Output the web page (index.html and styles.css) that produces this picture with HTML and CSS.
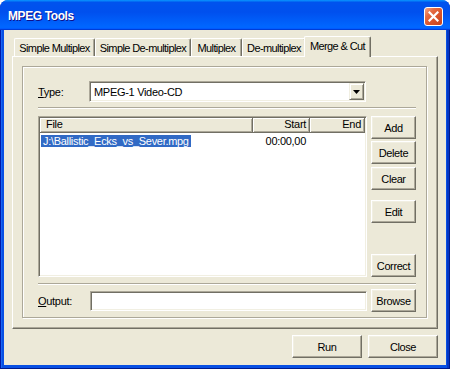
FILE: index.html
```html
<!DOCTYPE html>
<html>
<head>
<meta charset="utf-8">
<title>MPEG Tools</title>
<link rel="stylesheet" href="styles.css">
</head>
<body>
<div class="window">
  <div class="titlebar">
    <span class="title">MPEG Tools</span>
    <span class="close-x">
      <svg width="11" height="11" viewBox="0 0 11 11"><path d="M1.5 1.5 L9.5 9.5 M9.5 1.5 L1.5 9.5" stroke="#fff" stroke-width="2.2" stroke-linecap="square"/></svg>
    </span>
  </div>
  <div class="client">
    <div class="tabs">
      <div class="tab t1">Simple Multiplex</div>
      <div class="tab t2">Simple De-multiplex</div>
      <div class="tab t3">Multiplex</div>
      <div class="tab t4">De-multiplex</div>
      <div class="tab t5 active">Merge &amp; Cut</div>
    </div>
    <div class="panel">
      <div class="group">
        <div class="row type-row">
          <span class="lbl lbl-type"><u>T</u>ype:</span>
          <div class="combo">
            <span class="combo-text">MPEG-1 Video-CD</span>
            <span class="combo-btn"><svg width="7" height="4" viewBox="0 0 7 4"><polygon points="0,0 7,0 3.5,4" fill="#000"/></svg></span>
          </div>
        </div>
        <div class="sep sep1"></div>
        <div class="mid">
          <div class="listview">
            <div class="lv-header">
              <div class="hcell h-file">File</div>
              <div class="hcell h-start">Start</div>
              <div class="hcell h-end">End</div>
            </div>
            <div class="lv-row">
              <div class="cell c-file"><span class="sel">J:\Ballistic_Ecks_vs_Sever.mpg</span></div>
              <div class="cell c-start">00:00,00</div>
              <div class="cell c-end"></div>
            </div>
          </div>
          <div class="side-btns">
            <button class="btn side b-add">Add</button>
            <button class="btn side b-delete">Delete</button>
            <button class="btn side b-clear">Clear</button>
            <button class="btn side b-edit">Edit</button>
            <button class="btn side b-correct">Correct</button>
          </div>
        </div>
        <div class="sep sep2"></div>
        <div class="row out-row">
          <span class="lbl lbl-out"><u>O</u>utput:</span>
          <div class="textbox"></div>
          <button class="btn side b-browse">Browse</button>
        </div>
      </div>
    </div>
    <div class="footer">
      <button class="btn foot">Run</button>
      <button class="btn foot">Close</button>
    </div>
  </div>
</div>
</body>
</html>
```
FILE: styles.css
```css
* { box-sizing: border-box; }
html, body { margin: 0; padding: 0; background: #ffffff; }
body {
  width: 450px; height: 369px; overflow: hidden;
  font-family: "Liberation Sans", Arial, sans-serif;
  font-size: 11px; letter-spacing: -0.3px; color: #000;
}
.window {
  width: 450px; height: 369px;
  display: flex; flex-direction: column;
  border-radius: 8px 8px 0 0; overflow: hidden;
  background: linear-gradient(to right, #0019a8 0, #0019a8 1px, #1a66f2 1px, #1a66f2 2px, #0850e4 2px, #0850e4 447px, #0437c4 447px, #0437c4 449px, #001a8c 449px);
  box-shadow: inset 0 -1px #001a8c;
}
.titlebar {
  height: 30px; flex: none;
  display: flex; align-items: center; justify-content: space-between;
  padding: 2px 7px 0 8px;
  background: linear-gradient(180deg, #0997ff, #0053ee 8%, #0050ee 40%, #06f 88%, #06f 93%, #005bff 95%, #003dd7 96%, #003dd7);
}
.title {
  color: #fff; font-weight: bold; font-size: 12px; letter-spacing: -0.4px;
  text-shadow: 1px 1px #0f1089;
}
.close-x {
  width: 19px; height: 19px; border: 1px solid #fff; border-radius: 3px;
  display: flex; align-items: center; justify-content: center;
  background: linear-gradient(135deg, #f3a789 0%, #e46a42 30%, #d9532a 60%, #c7431d 100%);
}
.client {
  flex: 1; margin: 0 4px 4px;
  background: #ece9d8;
  display: flex; flex-direction: column;
  padding: 6px 8px 7px 8px;
}
.tabs {
  height: 20px; display: flex; align-items: flex-end;
  padding-left: 2px; position: relative; z-index: 2;
}
.tab {
  height: 18px; background: #ece9d8;
  border-top: 1px solid #fff; border-left: 1px solid #fff; border-right: 1px solid #716f64;
  border-radius: 2px 2px 0 0;
  box-shadow: inset -1px 0 #aca899;
  display: flex; align-items: center; justify-content: center;
  padding-top: 1px; white-space: nowrap;
  letter-spacing: -0.6px; overflow: hidden;
}
.t1 { width: 81px; }
.t2 { width: 96px; }
.t3 { width: 51px; }
.t4 { width: 64px; }
.t5 { width: 63px; }
.tab.active {
  height: 21px; margin: 0 -2px -1px; width: 67px;
  padding-top: 0; padding-bottom: 2px;
  position: relative; z-index: 3;
}
.panel {
  height: 273px; flex: none;
  border: 1px solid; border-color: #fff #716f64 #716f64 #fff;
  box-shadow: inset -1px -1px #aca899;
  padding: 9px 10px 10px 9px;
}
.group {
  width: 405px; height: 252px;
  border: 1px solid #aca899;
  box-shadow: inset 1px 1px #fff, 1px 1px 0 #fff;
  padding: 14px 10px 5px 15px;
  display: flex; flex-direction: column;
}
.row { display: flex; align-items: center; }
.type-row { height: 21px; }
.lbl { white-space: nowrap; }
.lbl-type { width: 51px; }
.lbl-out { width: 52px; }
.combo {
  width: 277px; height: 21px; background: #fff;
  border: 1px solid; border-color: #aca899 #fff #fff #aca899;
  box-shadow: inset 1px 1px #716f64, inset -1px -1px #f1efe2;
  padding: 1px; display: flex; align-items: center;
}
.combo-text { flex: 1; padding-left: 3px; }
.combo-btn {
  width: 15px; height: 17px; background: #ece9d8;
  border: 1px solid; border-color: #f1efe2 #716f64 #716f64 #f1efe2;
  box-shadow: inset 1px 1px #fff, inset -1px -1px #aca899;
  display: flex; align-items: center; justify-content: center;
}
.sep {
  width: 378px; height: 2px;
  border-top: 1px solid #aca899; border-bottom: 1px solid #fff;
}
.sep1 { margin-top: 5px; }
.mid { display: flex; gap: 4px; margin-top: 7px; height: 161px; }
.listview {
  width: 329px; height: 161px; background: #fff;
  border: 1px solid; border-color: #aca899 #fff #fff #aca899;
  box-shadow: inset 1px 1px #716f64, inset -1px -1px #f1efe2;
  padding: 1px;
}
.lv-header, .lv-row {
  display: grid; grid-template-columns: 213px 57px 1fr;
}
.lv-header { height: 15px; background: #ece9d8; }
.hcell {
  border-right: 1px solid #716f64; border-bottom: 1px solid #716f64;
  box-shadow: inset 1px 1px #fff, inset -1px -1px #aca899;
  line-height: 13px; white-space: nowrap;
}
.h-file { padding-left: 6px; }
.h-start, .h-end { text-align: right; padding-right: 3px; }
.lv-row { margin-top: 2px; height: 12px; line-height: 12px; }
.c-file { padding-left: 1px; }
.sel { display: inline-block; background: #316ac5; color: #fff; padding: 0 2px; height: 12px; }
.c-start { text-align: right; padding-right: 4px; }
.side-btns { width: 45px; display: flex; flex-direction: column; }
.btn {
  font: inherit; letter-spacing: -0.4px; color: #000;
  background: #ece9d8; padding: 0; margin: 0;
  border: 1px solid; border-color: #fff #716f64 #716f64 #fff;
  box-shadow: inset -1px -1px #aca899, inset 1px 1px #f1efe2;
  border-radius: 0; height: 23px;
}
.side { width: 45px; flex: none; }
.b-delete { margin-top: 2px; }
.b-clear { margin-top: 3px; }
.b-edit { margin-top: 10px; }
.b-correct { margin-top: auto; }
.sep2 { margin-top: 6px; }
.out-row { margin-top: 4px; height: 23px; }
.textbox {
  width: 277px; height: 20px; background: #fff; margin-right: 4px;
  border: 1px solid; border-color: #aca899 #fff #fff #aca899;
  box-shadow: inset 1px 1px #716f64, inset -1px -1px #f1efe2;
}
.footer {
  margin-top: 6px; display: flex; justify-content: flex-end; gap: 6px;
}
.foot { width: 70px; }
```
